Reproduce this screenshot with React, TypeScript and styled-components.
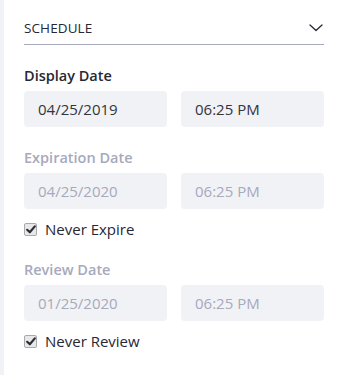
import styled, { createGlobalStyle } from "styled-components"

const Global = createGlobalStyle`
    html, body {
        margin:0;
        padding:0;
        background:#fff;
    }
    * {
        box-sizing:border-box;
    }
`

const Panel = styled.div`
    min-height:375px;
    border-left:4px solid #f1f2f5;
    padding:0 16px 0 20px;
    font-family:"Open Sans", "Noto Sans", sans-serif;
    color:#272833;
`
const Header = styled.div`
    display:flex;
    justify-content: space-between;
    align-items: center;
    padding:20px 1px 8px 0;
    border-bottom:1px solid #a7a9bc;
`
const HeaderTitle = styled.span`
    font-size:13.5px;
    line-height:16px;
    font-weight:400;
    letter-spacing:0.1px;
    text-transform: uppercase;
`
const Group = styled.div`
    margin-top:21px;
`
const Label = styled.div<{disabled?:boolean}>`
    font-size:14.5px;
    line-height:20px;
    font-weight:600;
    margin-bottom:5px;
    color:${p=>p.disabled ? "#a7a9bc" : "#272833"};
`
const Row = styled.div`
    display:grid;
    grid-template-columns: 1fr 1fr;
    gap:14px;
`
const Field = styled.input`
    width:100%;
    height:36px;
    border:none;
    border-radius:4px;
    background:#f1f2f5;
    padding:0 14px;
    font-family:inherit;
    font-size:15px;
    color:#33343d;
    outline:none;
    &:disabled {
        color:#a7a9bc;
        -webkit-text-fill-color:#a7a9bc;
        opacity:1;
    }
`
const Check = styled.label`
    display:flex;
    align-items: center;
    gap:8px;
    margin-top:10px;
    font-size:15px;
    line-height:20px;
    color:#272833;
`
const Box = styled.span`
    width:13px;
    height:13px;
    border:1px solid #a9a9ad;
    border-radius:2px;
    background:#e8e8ea;
    display:flex;
    align-items: center;
    justify-content: center;
`

const Tick = () => <svg width="10" height="9" viewBox="0 0 10 9">
    <path d="M1.2 4.8 L3.8 7.3 L8.8 1.4" fill="none" stroke="#2e2e33" strokeWidth="2.2" strokeLinecap="round" strokeLinejoin="round"/>
</svg>

const Chevron = () => <svg width="14" height="8" viewBox="0 0 14 8">
    <path d="M1 1 L7 6.5 L13 1" fill="none" stroke="#272833" strokeWidth="1.3" strokeLinecap="round" strokeLinejoin="round"/>
</svg>

type DateRow = {label:string, date:string, time:string, disabled?:boolean, never?:string}

const rows:DateRow[] = [
    {label:"Display Date", date:"04/25/2019", time:"06:25 PM"},
    {label:"Expiration Date", date:"04/25/2020", time:"06:25 PM", disabled:true, never:"Never Expire"},
    {label:"Review Date", date:"01/25/2020", time:"06:25 PM", disabled:true, never:"Never Review"},
]

const App = () => {
    return <Panel>
        <Global/>
        <Header>
            <HeaderTitle>Schedule</HeaderTitle>
            <Chevron/>
        </Header>
        {rows.map(r=><Group key={r.label}>
            <Label disabled={r.disabled}>{r.label}</Label>
            <Row>
                <Field value={r.date} disabled={r.disabled} readOnly/>
                <Field value={r.time} disabled={r.disabled} readOnly/>
            </Row>
            {r.never && <Check>
                <Box><Tick/></Box>
                {r.never}
            </Check>}
        </Group>)}
    </Panel>
}

export default App
